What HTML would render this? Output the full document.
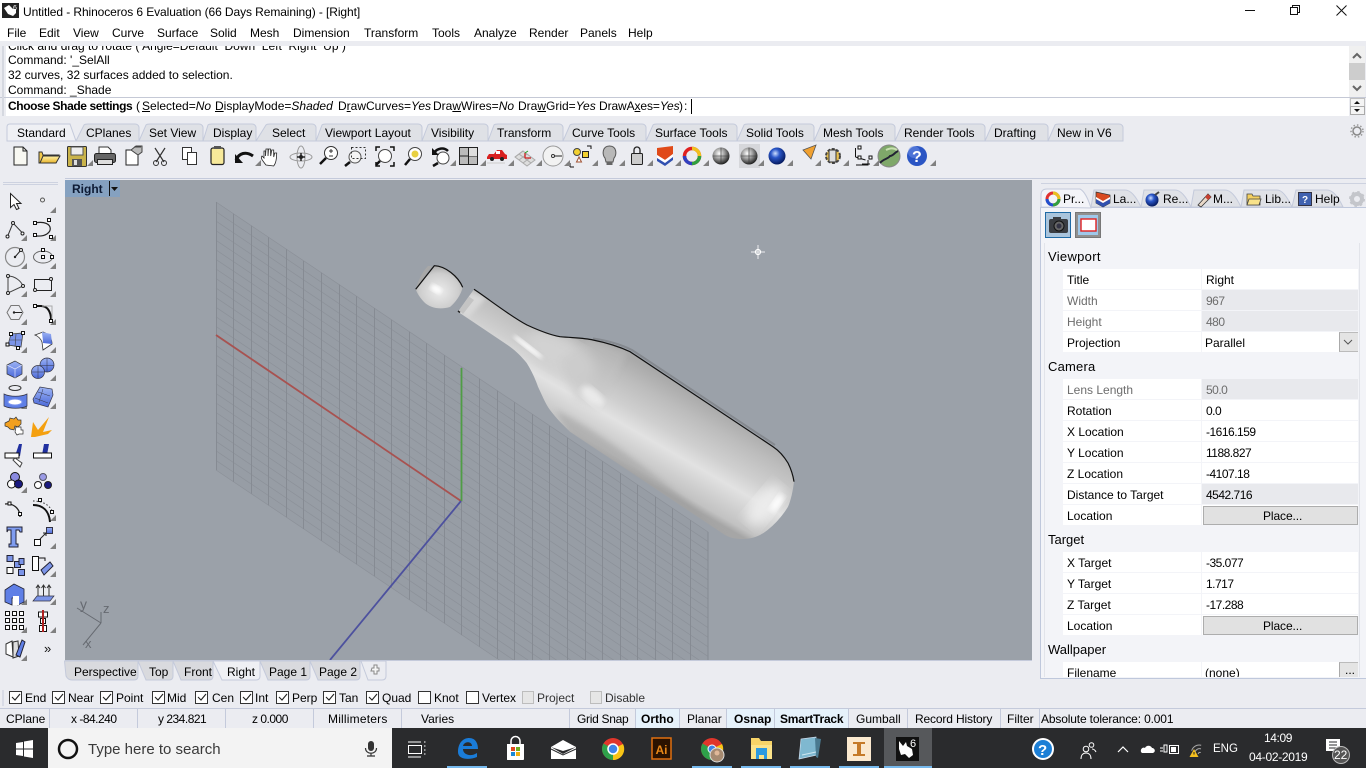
<!DOCTYPE html>
<html><head><meta charset="utf-8"><title>Rhinoceros 6</title>
<style>
html,body{margin:0;padding:0;width:1366px;height:768px;overflow:hidden;background:#ebecf1;font-family:"Liberation Sans",sans-serif;font-size:12px;color:#000}
.a{position:absolute}
.t{position:absolute;white-space:nowrap;line-height:14px;height:14px}
.n{letter-spacing:-.5px}
.g{color:#6d6d6d}
.w{color:#fff}
.b{font-weight:bold}
svg{position:absolute;left:0;top:0}
</style></head><body>
<div class="a" style="left:0;top:0;width:1366px;height:41px;background:#fff"></div>
<div class="a" style="left:6px;top:46px;width:1343px;height:70px;background:#fff"></div>
<div class="a" style="left:1349px;top:46px;width:16px;height:51px;background:#f0f0f0"></div>
<div class="a" style="left:1349px;top:63px;width:16px;height:17px;background:#cdcdcd"></div>
<div class="a" style="left:0;top:97px;width:1366px;height:1px;background:#c5c9d6"></div>
<div class="a" style="left:2px;top:46px;width:2px;height:70px;background:#d5d8e0"></div>
<div class="a" style="left:65px;top:180px;width:967px;height:480px;background:#9ba1a9"></div>
<div class="a" style="left:65px;top:178px;width:1301px;height:1px;background:#c4cadb"></div>
<div class="a" style="left:65px;top:180px;width:55px;height:17px;background:#85a1c0"></div>
<div class="a" style="left:3px;top:182px;width:55px;height:1px;background:#cdd2e0"></div>
<div class="a" style="left:3px;top:184px;width:55px;height:1px;background:#cdd2e0"></div>
<div class="a" style="left:1041px;top:183px;width:325px;height:1px;background:#cdd2e0"></div>
<div class="a" style="left:65px;top:660px;width:967px;height:1px;background:#c4cadb"></div>

<!-- right panel -->
<div class="a" style="left:1040px;top:207px;width:325px;height:470px;background:#f3f4f8;border:1px solid #bfc8dc;border-right:none"></div>
<div class="a" style="left:1044px;top:243px;width:314px;height:434px;background:#f3f4f8;border-left:1px solid #e2e4ea;border-right:1px solid #e2e4ea"></div>
<div class="a" style="left:1063px;top:269px;width:138px;height:20px;background:#fff"></div><div class="a" style="left:1202px;top:269px;width:156px;height:20px;background:#fff"></div>
<div class="a" style="left:1063px;top:290px;width:138px;height:20px;background:#fff"></div><div class="a" style="left:1202px;top:290px;width:156px;height:20px;background:#e8e9ed"></div>
<div class="a" style="left:1063px;top:311px;width:138px;height:20px;background:#fff"></div><div class="a" style="left:1202px;top:311px;width:156px;height:20px;background:#e8e9ed"></div>
<div class="a" style="left:1063px;top:332px;width:138px;height:20px;background:#fff"></div><div class="a" style="left:1202px;top:332px;width:156px;height:20px;background:#fff"></div>
<div class="a" style="left:1339px;top:332px;width:19px;height:20px;background:#e4e4e4;border-left:1px solid #aaa;border-top:1px solid #bbb;border-bottom:1px solid #bbb;box-sizing:border-box"></div>
<div class="a" style="left:1063px;top:379px;width:138px;height:20px;background:#fff"></div><div class="a" style="left:1202px;top:379px;width:156px;height:20px;background:#e8e9ed"></div>
<div class="a" style="left:1063px;top:400px;width:138px;height:20px;background:#fff"></div><div class="a" style="left:1202px;top:400px;width:156px;height:20px;background:#fff"></div>
<div class="a" style="left:1063px;top:421px;width:138px;height:20px;background:#fff"></div><div class="a" style="left:1202px;top:421px;width:156px;height:20px;background:#fff"></div>
<div class="a" style="left:1063px;top:442px;width:138px;height:20px;background:#fff"></div><div class="a" style="left:1202px;top:442px;width:156px;height:20px;background:#fff"></div>
<div class="a" style="left:1063px;top:463px;width:138px;height:20px;background:#fff"></div><div class="a" style="left:1202px;top:463px;width:156px;height:20px;background:#fff"></div>
<div class="a" style="left:1063px;top:484px;width:138px;height:20px;background:#fff"></div><div class="a" style="left:1202px;top:484px;width:156px;height:20px;background:#e8e9ed"></div>
<div class="a" style="left:1063px;top:505px;width:138px;height:20px;background:#fff"></div><div class="a" style="left:1202px;top:505px;width:156px;height:20px;background:#fff"></div>
<div class="a" style="left:1203px;top:506px;width:155px;height:19px;background:#e1e1e1;border:1px solid #adadad;box-sizing:border-box"></div>
<div class="a" style="left:1063px;top:552px;width:138px;height:20px;background:#fff"></div><div class="a" style="left:1202px;top:552px;width:156px;height:20px;background:#fff"></div>
<div class="a" style="left:1063px;top:573px;width:138px;height:20px;background:#fff"></div><div class="a" style="left:1202px;top:573px;width:156px;height:20px;background:#fff"></div>
<div class="a" style="left:1063px;top:594px;width:138px;height:20px;background:#fff"></div><div class="a" style="left:1202px;top:594px;width:156px;height:20px;background:#fff"></div>
<div class="a" style="left:1063px;top:615px;width:138px;height:20px;background:#fff"></div><div class="a" style="left:1202px;top:615px;width:156px;height:20px;background:#fff"></div>
<div class="a" style="left:1203px;top:616px;width:155px;height:19px;background:#e1e1e1;border:1px solid #adadad;box-sizing:border-box"></div>
<div class="a" style="left:1063px;top:662px;width:138px;height:15px;background:#fff"></div><div class="a" style="left:1202px;top:662px;width:156px;height:15px;background:#fff"></div>
<div class="a" style="left:1339px;top:662px;width:19px;height:15px;background:#e4e4e4;border-left:1px solid #aaa;border-top:1px solid #bbb;box-sizing:border-box"></div>

<!-- status bar -->
<div class="a" style="left:0;top:708px;width:1366px;height:1px;background:#c4cadb"></div>
<div class="a" style="left:635px;top:709px;width:44px;height:19px;background:#e6f2fb"></div>
<div class="a" style="left:727px;top:709px;width:121px;height:19px;background:#e6f2fb"></div>
<div class="a" style="left:49px;top:709px;width:1px;height:19px;background:#c4cadb"></div>
<div class="a" style="left:137px;top:709px;width:1px;height:19px;background:#c4cadb"></div>
<div class="a" style="left:225px;top:709px;width:1px;height:19px;background:#c4cadb"></div>
<div class="a" style="left:313px;top:709px;width:1px;height:19px;background:#c4cadb"></div>
<div class="a" style="left:401px;top:709px;width:1px;height:19px;background:#c4cadb"></div>
<div class="a" style="left:569px;top:709px;width:1px;height:19px;background:#c4cadb"></div>
<div class="a" style="left:635px;top:709px;width:1px;height:19px;background:#c4cadb"></div>
<div class="a" style="left:679px;top:709px;width:1px;height:19px;background:#c4cadb"></div>
<div class="a" style="left:726px;top:709px;width:1px;height:19px;background:#c4cadb"></div>
<div class="a" style="left:774px;top:709px;width:1px;height:19px;background:#c4cadb"></div>
<div class="a" style="left:848px;top:709px;width:1px;height:19px;background:#c4cadb"></div>
<div class="a" style="left:907px;top:709px;width:1px;height:19px;background:#c4cadb"></div>
<div class="a" style="left:1000px;top:709px;width:1px;height:19px;background:#c4cadb"></div>
<div class="a" style="left:1039px;top:709px;width:1px;height:19px;background:#c4cadb"></div>

<!-- taskbar -->
<div class="a" style="left:0;top:728px;width:1366px;height:40px;background:#2a2b2d"></div>
<div class="a" style="left:48px;top:728px;width:344px;height:40px;background:#f3f3f3"></div>
<div class="a" style="left:884px;top:728px;width:48px;height:40px;background:#56585b"></div>
<div class="a" style="left:447px;top:766px;width:40px;height:2px;background:#76b9ed"></div>
<div class="a" style="left:692px;top:766px;width:40px;height:2px;background:#76b9ed"></div>
<div class="a" style="left:741px;top:766px;width:40px;height:2px;background:#76b9ed"></div>
<div class="a" style="left:790px;top:766px;width:40px;height:2px;background:#76b9ed"></div>
<div class="a" style="left:839px;top:766px;width:40px;height:2px;background:#76b9ed"></div>
<div class="a" style="left:884px;top:766px;width:48px;height:2px;background:#76b9ed"></div>

<svg width="1366" height="768" viewBox="0 0 1366 768">
<defs>
<linearGradient id="bo" gradientUnits="userSpaceOnUse" x1="690" y1="391" x2="640" y2="478">
<stop offset="0" stop-color="#a9a9a9"/><stop offset=".2" stop-color="#bcbcbc"/><stop offset=".45" stop-color="#cfcfcf"/><stop offset=".62" stop-color="#e2e2e2"/><stop offset=".8" stop-color="#cfcfcf"/><stop offset=".93" stop-color="#c2c2c2"/><stop offset="1" stop-color="#a6a6a6"/>
</linearGradient>
<radialGradient id="cp" cx=".5" cy=".6" r=".6"><stop offset="0" stop-color="#ececec"/><stop offset=".7" stop-color="#cdcdcd"/><stop offset="1" stop-color="#aaa"/></radialGradient>
<radialGradient id="sp" cx=".4" cy=".35" r=".65"><stop offset="0" stop-color="#fff"/><stop offset=".5" stop-color="#999"/><stop offset="1" stop-color="#222"/></radialGradient>
<radialGradient id="bs" cx=".4" cy=".35" r=".65"><stop offset="0" stop-color="#cfe0ff"/><stop offset=".4" stop-color="#2a56c8"/><stop offset="1" stop-color="#051a60"/></radialGradient>
<linearGradient id="bl" x1="0" y1="0" x2="0" y2="1"><stop offset="0" stop-color="#9db4f5"/><stop offset="1" stop-color="#4a68d8"/></linearGradient>
<linearGradient id="ye" x1="0" y1="0" x2="0" y2="1"><stop offset="0" stop-color="#fff2a8"/><stop offset="1" stop-color="#e8b42c"/></linearGradient>
<filter id="f2"><feGaussianBlur stdDeviation="2"/></filter>
<filter id="f3"><feGaussianBlur stdDeviation="3"/></filter>
<filter id="f6"><feGaussianBlur stdDeviation="6"/></filter>
<clipPath id="vp"><rect x="65" y="180" width="967" height="480"/></clipPath>
<clipPath id="bc"><path d="M474 289.3C490 300 510 316 527 325C540 331 550 335 560 336.7C575 338 585 338 593 340C608 343 620 347 630 351.7L773 446.7C781 452 785 458 788 463C791 469 793 475 794 481.7C793 490 791 500 788 506.7C782 517 770 530 760 535C754 538 748 539 743 539C736 539 730 538 725 535L570 431.7C562 424 556 418 550 410C545 403 542 395 538 386.7C535 378 531 370 526.7 363C522 357 516 351 510 346.7L458 311.7Z"/></clipPath>
<clipPath id="cc"><path d="M415.7 289.3L434.3 265.7C445 266 458 276 462.7 287.3C461 295 455 303 450 307C440 310 430 308 424 302C420 298 417 293 415.700 289.3Z"/></clipPath>
</defs>

<!-- grid -->
<g clip-path="url(#vp)">
<path d="M216 202L708 532V800L216 470Z" fill="#979da5"/>
<g fill="none" stroke="#8c9199" stroke-width=".7">
<path d="M216 202l492 330M216 211.6l492 330M216 221.1l492 330M216 230.7l492 330M216 240.3l492 330M216 249.9l492 330M216 259.4l492 330M216 269l492 330M216 278.6l492 330M216 288.1l492 330M216 297.7l492 330M216 307.3l492 330M216 316.8l492 330M216 326.4l492 330M216 336l492 330M216 345.6l492 330M216 355.1l492 330M216 364.7l492 330M216 374.3l492 330M216 383.8l492 330M216 393.4l492 330M216 403l492 330M216 412.5l492 330M216 422.1l492 330M216 431.7l492 330M216 441.3l492 330M216 450.8l492 330M216 460.4l492 330M216 470l492 330"/>
</g>
<path fill="none" stroke="#868b93" stroke-width="1" d="M216.5 202v268M233.5 213.8v268M251.5 225.6v268M268.5 237.4v268M286.5 249.2v268M303.5 261v268M321.5 272.7v268M339.5 284.5v268M356.5 296.3v268M374.5 308.1v268M391.5 319.9v268M409.5 331.7v268M426.5 343.5v268M444.5 355.3v268M461.5 367.1v268M479.5 378.8v268M497.5 390.6v268M514.5 402.4v268M532.5 414.2v268M549.5 426v268M567.5 437.8v268M585.5 449.6v268M602.5 461.4v268M620.5 473.2v268M637.5 485v268M655.5 496.8v268M672.5 508.5v268M690.5 520.3v268M708 532v268"/>
<path d="M216 335L461 501" stroke="#a85250" stroke-width="1.8" fill="none"/>
<path d="M461.5 368V501" stroke="#4f9d45" stroke-width="1.8" fill="none"/>
<path d="M461 501L330 660" stroke="#4d519e" stroke-width="1.8" fill="none"/>
</g>

<!-- bottle -->
<path d="M593 338.500C610 341 622 345 632 350L775 445" fill="none" stroke="#85898f" stroke-width="2"/>
<path d="M474 289.3C490 300 510 316 527 325C540 331 550 335 560 336.7C575 338 585 338 593 340C608 343 620 347 630 351.7L773 446.7C781 452 785 458 788 463C791 469 793 475 794 481.7C793 490 791 500 788 506.7C782 517 770 530 760 535C754 538 748 539 743 539C736 539 730 538 725 535L570 431.7C562 424 556 418 550 410C545 403 542 395 538 386.7C535 378 531 370 526.7 363C522 357 516 351 510 346.7L458 311.7Z" fill="url(#bo)"/>
<g clip-path="url(#bc)">
<ellipse cx="560" cy="355" rx="38" ry="18" transform="rotate(30 560 355)" fill="#d2d2d2" filter="url(#f6)"/>
<path d="M470 292L458 312L468 318L486 298Z" fill="#d8d8d8" filter="url(#f2)"/>
<path d="M468 296L459 310L463 314L474 300Z" fill="#c4c4c4"/>
<ellipse cx="528" cy="347" rx="18" ry="2.500" transform="rotate(38 528 347)" fill="#fff" filter="url(#f2)"/>
<ellipse cx="592" cy="396" rx="13" ry="7" transform="rotate(40 592 396)" fill="#fff" filter="url(#f3)"/>
<path d="M628 352L598 410L575 400L560 360L590 340Z" fill="#c4c4c4" opacity=".35" filter="url(#f3)"/>
<path d="M555 410C600 430 690 500 725 538L570 435Z" fill="#9e9e9e" opacity=".5" filter="url(#f3)"/>
<ellipse cx="765" cy="505" rx="24" ry="12" transform="rotate(-50 765 505)" fill="#ececec" filter="url(#f6)"/>
<ellipse cx="777" cy="503" rx="4" ry="10" transform="rotate(35 777 503)" fill="#fff" filter="url(#f3)"/>
</g>
<path d="M474 289.3C490 300 510 316 527 325C540 331 550 335 560 336.7C575 338 585 338 593 340C608 343 620 347 630 351.7L773 446.7C781 452 785 458 788 463C791 469 793 475 794 481.7" fill="none" stroke="#111" stroke-width="1.2"/>
<path d="M458 311l2 1.5" stroke="#222" stroke-width="1.5"/>
<path d="M415.7 289.3L434.3 265.7C445 266 458 276 462.7 287.3C461 295 455 303 450 307C440 310 430 308 424 302C420 298 417 293 415.700 289.3Z" fill="url(#cp)"/>
<g clip-path="url(#cc)"><ellipse cx="436" cy="289" rx="6" ry="3.500" transform="rotate(30 436 289)" fill="#fff" filter="url(#f2)"/></g>
<path d="M415.7 289.3L432 266L428 266C422 272 418 281 415.7 289.3Z" fill="#a8a8a8"/>
<path d="M415.7 289.3L434.3 265.7C445 266 458 276 462.7 287.3" fill="none" stroke="#111" stroke-width="1.2"/>
<!-- cursor sparkle -->
<g stroke="#fff" fill="none"><path d="M758 245v14M751 252h14" stroke-width="1" opacity=".8"/><circle cx="758" cy="252" r="2.5" stroke-width="1.2"/></g>
<!-- axis mini -->
<g stroke="#666a71" stroke-width="1" fill="none"><path d="M101 623L77 608M101 623V612M101 623L83 645"/></g>
<text x="80" y="609" font-size="14" fill="#666a71" font-family="Liberation Sans">y</text>
<text x="103" y="613" font-size="13" fill="#666a71" font-family="Liberation Sans">z</text>
<text x="85" y="648" font-size="13" fill="#666a71" font-family="Liberation Sans">x</text>

<!-- viewport label arrow -->
<path d="M109.5 181v15" stroke="#111"/><path d="M111 187h7l-3.5 4z" fill="#111"/>

<!-- top tabs -->
<g fill="#dfe1e6" stroke="#c4cadb">
<path d="M76 141L84 125Q85 124 88 124H135Q138 124 139 127L139 141Z"/>
<path d="M139 141L146 125Q147 124 150 124H199Q202 124 203 127L203 141Z"/>
<path d="M203 141L208 125Q209 124 212 124H252Q255 124 256 127L256 141Z"/>
<path d="M256 141L266 125Q267 124 270 124H312Q315 124 316 127L316 141Z"/>
<path d="M316 141L322 125Q323 124 326 124H418Q421 124 422 127L422 141Z"/>
<path d="M422 141L428 125Q429 124 432 124H484Q487 124 488 127L488 141Z"/>
<path d="M488 141L494 125Q495 124 498 124H559Q562 124 563 127L563 141Z"/>
<path d="M563 141L570 125Q571 124 574 124H642Q645 124 646 127L646 141Z"/>
<path d="M646 141L653 125Q654 124 657 124H733Q736 124 737 127L737 141Z"/>
<path d="M737 141L744 125Q745 124 748 124H810Q813 124 814 127L814 141Z"/>
<path d="M814 141L821 125Q822 124 825 124H891Q894 124 895 127L895 141Z"/>
<path d="M895 141L902 125Q903 124 906 124H981Q984 124 985 127L985 141Z"/>
<path d="M985 141L992 125Q993 124 996 124H1044Q1047 124 1048 127L1048 141Z"/>
<path d="M1048 141L1055 125Q1056 124 1059 124H1119Q1122 124 1123 127L1123 141Z"/>
</g>
<path d="M7 141V127Q7 124 10 124H70L76 141Z" fill="#eff0f4" stroke="#c4cadb"/>

<!-- bottom tabs -->
<g fill="#d9dade" stroke="#c4cadb">
<path d="M64.500 661H138V676Q138 680 134 680H72Q68 680 66 676Z"/>
<path d="M138 661H173V676Q173 680 169 680H146Z"/>
<path d="M173 661H213V676Q213 680 209 680H181Z"/>
<path d="M260 661H310V676Q310 680 306 680H268Z"/>
<path d="M310 661H360V676Q360 680 356 680H318Z"/>
</g>
<path d="M213 661H260V676Q260 680 256 680H222Z" fill="#eff0f4" stroke="#c4cadb"/>
<path d="M361 661H386V676Q386 680 382 680H368Z" fill="#ebecf1" stroke="#c4cadb"/>
<path d="M372 671h2v-3h3v3h2v3h-2v3h-3v-3h-3z" fill="#f6f6f6" stroke="#888" transform="translate(0 -3)"/>

<!-- right panel tabs -->
<g fill="#dfe1e6" stroke="#c4cadb">
<path d="M1091 207L1094 190H1125Q1133 190 1141 207Z"/>
<path d="M1141 207L1144 190H1175Q1183 190 1191 207Z"/>
<path d="M1191 207L1194 190H1225Q1233 190 1241 207Z"/>
<path d="M1241 207L1244 190H1277Q1284 190 1292 207Z"/>
<path d="M1292 207L1296 190H1327Q1335 190 1343 207Z"/>
</g>
<path d="M1041 207V195Q1041 189 1047 189H1080Q1086 192 1091 208Z" fill="#f3f4f8" stroke="#c4cadb"/>
<!-- panel tab icons -->
<g>
<circle cx="1053" cy="199" r="6" fill="none" stroke="#e03030" stroke-width="3"/>
<path d="M1053 193a6 6 0 0 1 6 6" fill="none" stroke="#e8c020" stroke-width="3"/><path d="M1059 199a6 6 0 0 1-6 6" fill="none" stroke="#30a040" stroke-width="3"/><path d="M1053 205a6 6 0 0 1-6-6" fill="none" stroke="#2050d0" stroke-width="3"/>
<path d="M1096 192L1110 195V203L1103 207L1096 203Z" fill="#d84a20" stroke="#333" stroke-width=".7"/><path d="M1096 199l7 4 7-4v4l-7 4-7-4z" fill="#3050b0"/><path d="M1096 197l7 4 7-4v2l-7 4-7-4z" fill="#fff"/>
<circle cx="1152" cy="200" r="6.500" fill="url(#bs)"/><path d="M1155 195l4-3" stroke="#444" stroke-width="2"/>
<path d="M1198 205l10-11 3 3-10 10z" fill="#e8d8c8" stroke="#333" stroke-width=".8"/><path d="M1205 197l3-3 3 3-3 3z" fill="#c84030"/>
<path d="M1247 194h5l1 2h7v9h-13z" fill="#f4d060" stroke="#444" stroke-width=".8"/><path d="M1247 205l2-6h12l-2 6z" fill="#f8e28a" stroke="#444" stroke-width=".8"/>
<rect x="1298.500" y="192.500" width="13" height="13" fill="#4062b0" stroke="#334"/><text x="1302" y="203" font-size="10" fill="#fff" font-weight="bold" font-family="Liberation Sans">?</text>
<circle cx="1357" cy="199" r="5" fill="none" stroke="#c4c6cb" stroke-width="4"/><circle cx="1357" cy="199" r="7" fill="none" stroke="#c4c6cb" stroke-width="2" stroke-dasharray="2.500 3"/>
</g>
<!-- camera buttons -->
<rect x="1045.500" y="212.500" width="25" height="25" fill="#a9c4dc" stroke="#1f6aa5"/>
<rect x="1049" y="219" width="19" height="14" rx="2" fill="#3a3d42"/><rect x="1053" y="217" width="8" height="3" fill="#3a3d42"/><circle cx="1059" cy="226" r="5" fill="#666" stroke="#111"/><circle cx="1059" cy="226" r="2.500" fill="#334"/>
<rect x="1075.500" y="212.500" width="25" height="25" fill="#909090" stroke="#777"/><rect x="1078" y="215" width="20" height="20" fill="#9fc8ea"/><rect x="1081" y="219" width="15" height="12" fill="#fff" stroke="#e02020" stroke-width="1.400"/>
<path d="M1344 340l4 4 4-4" fill="none" stroke="#555"/>

<!-- scroll chevrons -->
<path d="M1353 58l4-4 4 4" fill="none" stroke="#666" stroke-width="2"/><path d="M1353 86l4 4 4-4" fill="none" stroke="#666" stroke-width="2"/>
<rect x="1350.500" y="98.500" width="14" height="8" fill="#f4f4f4" stroke="#c0c0c0"/><rect x="1350.500" y="106.500" width="14" height="8" fill="#f4f4f4" stroke="#aaa"/>
<path d="M1357 101l-3 3h6z" fill="#111"/><path d="M1354 109h6l-3 3z" fill="#111"/>
<!-- window controls -->
<path d="M1245 10.500h10" stroke="#111"/><path d="M1292.500 7.500v-2h7v7h-2M1290.500 7.500h7v7h-7z" fill="none" stroke="#111"/><path d="M1336.500 5.500l10 10M1346.500 5.500l-10 10" stroke="#111" fill="none"/>
<!-- app icon -->
<rect x="2" y="3" width="17" height="15" fill="#222"/><path d="M4 8l5-3 4 4 3 0 0 4-3 3-5-2-2-3z" fill="#fff"/><text x="13" y="10" font-size="7" fill="#fff" font-family="Liberation Sans">6</text>
<!-- gear top right -->
<circle cx="1357" cy="131" r="4" fill="none" stroke="#888" stroke-width="1.500"/><circle cx="1357" cy="131" r="6" fill="none" stroke="#999" stroke-width="1.500" stroke-dasharray="1.500 2"/>

<!-- TOP TOOLBAR ICONS -->
<path d="M14 147h9l4 4v14H14z" fill="#f8f8f2" stroke="#222"/><path d="M23 147v4h4" fill="none" stroke="#222"/>
<path d="M39 152v11h17l3-8H43l-1-3z" fill="#f2c94c" stroke="#333"/><path d="M40 163l3-7h17l-4 7z" fill="url(#ye)" stroke="#333"/>
<rect x="67.500" y="146.500" width="19" height="20" rx="1" fill="#c9b34a" stroke="#333"/><rect x="71" y="147" width="12" height="8" fill="#eee" stroke="#555"/><rect x="72" y="159" width="10" height="7" fill="#555"/><rect x="74" y="160" width="3" height="5" fill="#ddd"/>
<rect x="94.500" y="153.500" width="21" height="9" rx="2" fill="#666" stroke="#222"/><path d="M99 153v-6h9l3 3v3" fill="#fff" stroke="#333"/><rect x="97.500" y="159.500" width="15" height="5" fill="#ddd" stroke="#222"/>
<path d="M126 150h12v15h-12z" fill="#fff" stroke="#222"/><path d="M131 150l5-4h6v6l-4 3z" fill="#bbb" stroke="#444"/><path d="M134 147l7 0" stroke="#444"/>
<path d="M155 148l9 14M165 148l-9 14" stroke="#333" stroke-width="1.200" fill="none"/><circle cx="156" cy="163" r="2.500" fill="none" stroke="#333"/><circle cx="164" cy="163" r="2.500" fill="none" stroke="#333"/>
<rect x="182.500" y="147.500" width="9" height="12" fill="#fff" stroke="#333"/><rect x="187.500" y="152.500" width="9" height="12" fill="#fff" stroke="#333"/>
<rect x="211" y="148" width="13" height="16.500" rx="2" fill="#f7e99a" stroke="#222" stroke-width="1.200"/><rect x="214" y="146" width="7" height="3" fill="#555"/>
<path d="M236 160c3-7 10-9 17-4" fill="none" stroke="#111" stroke-width="3"/><path d="M235 154v9h8z" fill="#111"/>
<path d="M266 165c-3-4-6-7-4-9l2 2v-7h1.500v5l.5-7h2v7l.5-7h2l.2 7 1-6h2v7l1-4h2c0 6-.5 10-3 13z" fill="#fff" stroke="#222" stroke-width=".8"/>
<ellipse cx="301" cy="157" rx="11" ry="4" fill="none" stroke="#999"/><ellipse cx="301" cy="157" rx="4" ry="11" fill="none" stroke="#999"/><path d="M297 157h8M301 153v8" stroke="#222" stroke-width="1.500"/><circle cx="301" cy="157" r="2" fill="#222"/>
<circle cx="331" cy="153" r="6.500" fill="#fff" stroke="#333"/><path d="M326 158l-6 6" stroke="#111" stroke-width="2.500"/><path d="M329 151h4M331 149v4M329 156h4" stroke="#333"/>
<circle cx="355" cy="157" r="6" fill="#f4f4f4" stroke="#555"/><path d="M350 162l-5 4" stroke="#111" stroke-width="2.500"/><rect x="351.500" y="147.500" width="14" height="11" fill="none" stroke="#333" stroke-dasharray="2 2"/>
<circle cx="385" cy="156" r="6.500" fill="#fff" stroke="#444"/><path d="M380 161l-4 4" stroke="#111" stroke-width="2.500"/><path d="M376 151v-4h4M394 151v-4h-4M376 162v4h4M394 162v4h-4" fill="none" stroke="#111" stroke-width="1.500"/>
<circle cx="415" cy="154" r="6.500" fill="#fff" stroke="#444"/><circle cx="415" cy="154" r="3.500" fill="#e8d040"/><path d="M410 159l-5 6" stroke="#111" stroke-width="2.500"/>
<circle cx="443" cy="158" r="6" fill="#fff" stroke="#444"/><path d="M438 163l-5 3" stroke="#111" stroke-width="2.500"/><path d="M434 153c3-5 10-6 14-2" fill="none" stroke="#111" stroke-width="2.500"/><path d="M432 148v7h7z" fill="#111"/>
<rect x="459.500" y="147.500" width="18" height="17" fill="#bbb" stroke="#222"/><path d="M468.500 147v18M459 156h19" stroke="#222"/><path d="M469 148h8v8h-8z" fill="#ddd"/>
<path d="M487 157l2-3h5l3-4h5l3 4 2 1v4h-20z" fill="#d82020"/><circle cx="492" cy="159" r="2" fill="#222"/><circle cx="502" cy="159" r="2" fill="#222"/><path d="M505 163h-18" stroke="#ccc"/><rect x="496" y="151" width="4" height="3" fill="#fff"/>
<path d="M515 157l8-6 12 9-8 6z" fill="#ddd" stroke="#aaa"/><path d="M519 154l12 9M523 151l-8 6M527 154l-8 6M531 157l-8 6" stroke="#aaa" fill="none"/><path d="M525 158v-5M525 158h6" stroke="#d02020" stroke-width="1.300"/><path d="M525 153l3-2" stroke="#20a020"/>
<circle cx="553" cy="156" r="10" fill="#f2f2f2" stroke="#999"/><circle cx="553" cy="156" r="1.500" fill="#fff" stroke="#333"/><path d="M554 156h8" stroke="#222"/>
<circle cx="577" cy="152" r="3.500" fill="#f2d030" stroke="#444"/><rect x="582.500" y="151.500" width="6" height="6" fill="#f2d030" stroke="#222"/><path d="M579 157l-2.500 5h5z" fill="#fff" stroke="#a05030"/><path d="M587 146h4v3M570 167v-4M574 167h-4" fill="none" stroke="#111"/>
<path d="M605 158c-3-3-3-12 4.500-12s7.500 9 4.500 12l-1 4h-7z" fill="#b8b8b8" stroke="#555"/><rect x="606.500" y="162" width="6" height="3" fill="#666"/>
<rect x="631.500" y="153.500" width="11" height="11" rx="1" fill="#ccc" stroke="#222"/><path d="M634 153v-3a3 3 0 0 1 6 0v3" fill="none" stroke="#222" stroke-width="1.300"/>
<path d="M657 148l16-2v8l-8 6-8-5z" fill="#e04a18"/><path d="M657 155l8 5 8-6v3l-8 6-8-5z" fill="#fff"/><path d="M657 158l8 5 8-6v3l-8 6-8-5z" fill="#3050b0"/>
<circle cx="692" cy="156" r="7.500" fill="none" stroke="#e02020" stroke-width="3.500"/><path d="M692 148.500a7.500 7.500 0 0 1 7.500 7.500" fill="none" stroke="#f0c020" stroke-width="3.500"/><path d="M699.500 156a7.500 7.500 0 0 1-7.500 7.500" fill="none" stroke="#30a040" stroke-width="3.500"/><path d="M692 163.500a7.500 7.500 0 0 1-7.500-7.500" fill="none" stroke="#3040c0" stroke-width="3.500"/>
<circle cx="721" cy="156" r="8.500" fill="url(#sp)"/><path d="M712.500 156h17M721 147.500v17" stroke="#333" stroke-width=".6"/>
<rect x="739" y="144" width="21" height="24" fill="#d6d7db"/><circle cx="749" cy="156" r="8.500" fill="url(#sp)"/><path d="M740.500 156h17M749 147.500v17" stroke="#333" stroke-width=".6"/>
<circle cx="777" cy="156" r="8.500" fill="url(#bs)"/>
<path d="M803 150l13-5-5 14z" fill="#f0a030" stroke="#555" stroke-width=".8"/>
<circle cx="833" cy="156" r="7" fill="#e8c050" stroke="#444" stroke-dasharray="3 1.500" stroke-width="2"/><rect x="829" y="150" width="7" height="12" fill="#ddd" stroke="#333"/>
<path d="M855.500 148v9M855.500 157l10 3M868 160v5h-12" fill="none" stroke="#111"/><rect x="858" y="146" width="3" height="3" fill="#fff" stroke="#111"/><rect x="858" y="156" width="3" height="3" fill="#fff" stroke="#111"/><rect x="869" y="156" width="3" height="3" fill="#fff" stroke="#111"/><path d="M862 164h8" stroke="#111"/>
<circle cx="889" cy="156" r="11" fill="#7fa86a" stroke="#888"/><path d="M880 163c3-4 8-4 10-7 3 0 4-3 8-5" stroke="#223" stroke-width="2" fill="none"/><path d="M886 150c4-2 8-2 11 0" stroke="#c8e0b0" stroke-width="2" fill="none"/>
<circle cx="917" cy="156" r="10" fill="#2a55c4"/><circle cx="914" cy="152" r="6" fill="#6f92e8" opacity=".5"/><text x="912" y="162" font-size="16" font-weight="bold" fill="#fff" font-family="Liberation Sans">?</text>

<!-- dropdown triangles -->
<path fill="#808080" d="M87 166l6-6v6zM255 166l6-6v6zM450 166l6-6v6zM480 166l6-6v6zM508 166l6-6v6zM536 166l6-6v6zM564 166l6-6v6zM592 166l6-6v6zM619 166l6-6v6zM647 166l6-6v6zM675 166l6-6v6zM703 166l6-6v6zM758 166l6-6v6zM787 166l6-6v6zM815 166l6-6v6zM843 166l6-6v6zM873 166l6-6v6zM930 166l6-6v6z"/>
<path fill="#808080" d="M50 213l6-6v6zM21 241l6-6v6zM50 241l6-6v6zM21 269l6-6v6zM50 269l6-6v6zM21 297l6-6v6zM50 297l6-6v6zM21 325l6-6v6zM50 325l6-6v6zM21 353l6-6v6zM50 353l6-6v6zM21 381l6-6v6zM50 381l6-6v6zM21 409l6-6v6zM50 409l6-6v6zM21 493l6-6v6zM50 521l6-6v6zM50 549l6-6v6zM50 577l6-6v6zM21 605l6-6v6zM50 605l6-6v6zM21 633l6-6v6zM50 633l6-6v6zM21 661l6-6v6z"/>

<!-- LEFT TOOLBAR ICONS -->
<path d="M10.500 193.500v14l3.500-3 2.500 5 2.500-1-2.500-5h4.500z" fill="#fff" stroke="#222"/><circle cx="42.500" cy="200" r="2" fill="#eee" stroke="#555"/>
<path d="M7.500 236.500L13 223l9.500 10" fill="none" stroke="#333"/><circle cx="7.500" cy="236.500" r="1.500" fill="#fff" stroke="#222"/><circle cx="13" cy="223" r="1.500" fill="#fff" stroke="#222"/><circle cx="22.500" cy="233.500" r="1.500" fill="#fff" stroke="#222"/>
<path d="M35 223c20-4 20 14 2 13" fill="none" stroke="#222" stroke-width="1.200"/><rect x="33.500" y="221.500" width="3" height="3" fill="#fff" stroke="#111"/><rect x="47.500" y="218.500" width="3" height="3" fill="#fff" stroke="#111"/><rect x="33.500" y="233.500" width="3" height="3" fill="#fff" stroke="#111"/><rect x="49.500" y="235.500" width="3" height="3" fill="#fff" stroke="#111"/>
<circle cx="15" cy="257" r="9.500" fill="none" stroke="#888" stroke-width="1.200"/><path d="M15 257l6-7" stroke="#222"/><circle cx="15" cy="257" r="1.200" fill="#222"/><circle cx="21" cy="250" r="1.500" fill="#fff" stroke="#222"/>
<ellipse cx="43" cy="257" rx="9.500" ry="6" fill="none" stroke="#666"/><rect x="41.500" y="248.500" width="3" height="3" fill="#fff" stroke="#111"/><rect x="41.500" y="255.500" width="3" height="3" fill="#fff" stroke="#111"/><rect x="50.500" y="255.500" width="3" height="3" fill="#fff" stroke="#111"/>
<path d="M8 276v17l15-7c-2-5-8-10-15-10z" fill="none" stroke="#444"/><circle cx="8" cy="276" r="1.500" fill="#fff" stroke="#222"/><circle cx="8" cy="293" r="1.500" fill="#fff" stroke="#222"/><circle cx="23" cy="286" r="1.500" fill="#fff" stroke="#222"/>
<rect x="34.500" y="279.500" width="17" height="11" fill="none" stroke="#222"/><circle cx="51" cy="279" r="1.500" fill="#fff" stroke="#222"/><circle cx="35" cy="290" r="1.500" fill="#fff" stroke="#222"/>
<path d="M7 312.500l4-7h8l4 7-4 7h-8z" fill="none" stroke="#777"/><path d="M14 312.500h8" stroke="#222"/><circle cx="14" cy="312.500" r="1.200" fill="#222"/>
<path d="M35 306h6c6 0 10 5 10 14" fill="none" stroke="#111" stroke-width="2"/><path d="M42 306h10v14" fill="none" stroke="#aaa"/><rect x="33.500" y="304.500" width="3" height="3" fill="#fff" stroke="#111"/><rect x="49.500" y="319.500" width="3" height="3" fill="#fff" stroke="#111"/>
<path d="M11 334l12-1-2 14-13-2z" fill="#7b94e8" stroke="#444" stroke-width=".8"/><path d="M16 334l-1 13M10 340l12 0" stroke="#444" stroke-width=".6"/><rect x="9.500" y="332.500" width="3" height="3" fill="#fff" stroke="#111"/><rect x="21.500" y="331.500" width="3" height="3" fill="#fff" stroke="#111"/><rect x="6" y="343" width="3" height="3" fill="#fff" stroke="#111"/><rect x="16.500" y="346.500" width="3" height="3" fill="#fff" stroke="#111"/>
<path d="M35 335l8-3c6 2 9 7 9 12l-9 6-1-8c-1-3-4-6-7-7z" fill="#fff" stroke="#333" stroke-width=".8"/><path d="M42 332l9 2 1 10-9-1c0-5-1-8-1-11z" fill="url(#bl)"/>
<path d="M7 365l8-4 7 4v9l-7 4-8-4z" fill="url(#bl)" stroke="#333" stroke-width=".7"/><path d="M15 369v9M7 365l8 4 7-4" stroke="#eef" stroke-width=".6" fill="none"/>
<circle cx="47" cy="365" r="7" fill="url(#bl)" stroke="#334" stroke-width=".7"/><circle cx="38" cy="372" r="6.500" fill="url(#bl)" stroke="#334" stroke-width=".7"/><path d="M40 365.500h14M47 358v14M32 372h12M38 366v12" stroke="#334" stroke-width=".5"/>
<ellipse cx="15" cy="388" rx="6" ry="2.500" fill="none" stroke="#333"/><path d="M4 394c6 3 17 3 23 0v12c-6 3-17 3-23 0z" fill="#5f7fe6" stroke="#334" stroke-width=".7"/><ellipse cx="15" cy="402" rx="7" ry="3" fill="#fff" stroke="#7a94ee"/>
<path d="M33 399l7-12 12 2 1 6-5 12-14-4z" fill="url(#bl)" stroke="#334" stroke-width=".7"/><path d="M38 392l12 4M35 398l13 5M43 389l-4 13" stroke="#334" stroke-width=".5"/>
<path d="M5 423l4-2 1-3 4 1 2-2 2 3 3 0 0 4-3 3-3-1-1 4-4-1-2-2-3-1z" fill="#f2a020" stroke="#333" stroke-width=".7"/><path d="M16 427h5v3h2v4h-4l-2 1-2-3z" fill="#fff" stroke="#333" stroke-width=".7"/>
<path d="M31 437l2-15 5 8 11-13-6 15 9-2-4 4-13 3z" fill="#f4a010"/>
<path d="M19 444h3l-2 12h-5z" fill="#2030a0"/><path d="M5 453h14v5H5z" fill="#fff" stroke="#111"/><path d="M15 458l7 5-2 4-7-7z" fill="#fff" stroke="#444"/>
<path d="M44 444h5l-2 11h-5z" fill="#2030a0"/><rect x="33.500" y="453" width="18" height="5" fill="#fff" stroke="#111"/>
<circle cx="15" cy="477" r="4.500" fill="#8a8ae0" stroke="#111"/><circle cx="11.500" cy="484" r="4" fill="#fff" stroke="#111"/><circle cx="18.500" cy="484" r="4" fill="#1a1a80" stroke="#111"/>
<circle cx="43" cy="477" r="3.500" fill="#9a9ae6" stroke="#556"/><circle cx="38" cy="485" r="3.500" fill="#fff" stroke="#222"/><circle cx="48" cy="485" r="3.500" fill="#1a1a80" stroke="#222"/>
<path d="M5 504c8-1 15 4 15 13" fill="none" stroke="#222" stroke-width="1.300"/><rect x="8" y="502" width="3" height="3" fill="#fff" stroke="#111"/><rect x="18.500" y="512.500" width="3" height="3" fill="#fff" stroke="#111"/>
<path d="M33 505c10 0 16 6 17 17" fill="none" stroke="#111" stroke-width="2"/><path d="M33 501c12 0 19 6 21 15" fill="none" stroke="#333" stroke-dasharray="1.500 2"/><rect x="38.500" y="498.500" width="3" height="3" fill="#fff" stroke="#111"/><rect x="50.500" y="510.500" width="3" height="3" fill="#fff" stroke="#111"/>
<path d="M7 527h15v5h-2l-1-2h-3v14h2v3h-9v-3h2v-14h-3l-1 2H7z" fill="#7f9cf0" stroke="#223"/>
<rect x="34.500" y="539.500" width="6" height="6" fill="#fff" stroke="#111"/><rect x="46.500" y="527.500" width="6" height="6" fill="url(#bl)" stroke="#334"/><path d="M40 539l6-6M46 533h-3M46 533v3" stroke="#222" fill="none"/>
<rect x="7" y="555.500" width="6" height="6" fill="#7b94e8" stroke="#223"/><rect x="14.500" y="561.500" width="6" height="6" fill="#7b94e8" stroke="#223"/><rect x="19" y="558.500" width="5" height="6" fill="#7b94e8" stroke="#223"/><rect x="7" y="567.500" width="6" height="6" fill="#fff" stroke="#111"/><rect x="18.500" y="569.500" width="6" height="6" fill="#7b94e8" stroke="#223"/>
<rect x="32.500" y="556.500" width="6" height="14" fill="#fff" stroke="#111"/><path d="M41 570l9-8 3 4-9 9z" fill="#7b94e8" stroke="#223"/><path d="M38 558h7v3" fill="none" stroke="#111"/>
<path d="M5 590l9-6 10 5v13l-6 3v-7h-6v7l-7-3z" fill="#5f7fe6" stroke="#223" stroke-width=".8"/><path d="M13 596h6v9h-6z" fill="#fff"/>
<path d="M33 601l4-5h17l-4 5z" fill="#7b94e8" stroke="#334" stroke-width=".7"/><path d="M38 596v-10M43.500 596v-10M49 596v-10M36 588l2-3 2 3M41.500 588l2-3 2 3M47 588l2-3 2 3" stroke="#333" fill="none"/>
<g fill="#fff" stroke="#111"><rect x="5.500" y="611.500" width="4" height="4"/><rect x="12.500" y="611.500" width="4" height="4"/><rect x="19.500" y="611.500" width="4" height="4"/><rect x="5.500" y="618.500" width="4" height="4"/><rect x="12.500" y="618.500" width="4" height="4"/><rect x="19.500" y="618.500" width="4" height="4"/><rect x="5.500" y="625.500" width="4" height="4"/><rect x="12.500" y="625.500" width="4" height="4"/><rect x="19.500" y="625.500" width="4" height="4"/></g>
<rect x="38.500" y="612" width="9" height="5" fill="#fff" stroke="#111"/><rect x="40.500" y="618.500" width="5" height="5" fill="#fff" stroke="#111"/><rect x="39.500" y="625.500" width="7" height="6" fill="#fff" stroke="#111"/><path d="M43 610v22" stroke="#b02020" stroke-width="2"/>
<path d="M6 644l6-3 1 16-7-3z" fill="#fff" stroke="#333"/><path d="M13 642l5-1 1 15-6 2z" fill="#ddd" stroke="#333"/><path d="M16 655l6-15 3 2-5 15z" fill="#5f7fe6" stroke="#223"/>
<text x="44" y="653" font-size="13" font-family="Liberation Sans" fill="#111">»</text>

<!-- checkboxes -->
<g fill="#fff" stroke="#333"><rect x="9.500" y="691.500" width="12" height="12"/><rect x="52.500" y="691.500" width="12" height="12"/><rect x="100.500" y="691.500" width="12" height="12"/><rect x="152.500" y="691.500" width="12" height="12"/><rect x="195.500" y="691.500" width="12" height="12"/><rect x="240.500" y="691.500" width="12" height="12"/><rect x="276.500" y="691.500" width="12" height="12"/><rect x="323.500" y="691.500" width="12" height="12"/><rect x="366.500" y="691.500" width="12" height="12"/><rect x="418.500" y="691.500" width="12" height="12"/><rect x="466.500" y="691.500" width="12" height="12"/></g>
<g fill="#e6e6e6" stroke="#bdbdbd"><rect x="522.500" y="691.500" width="11" height="12"/><rect x="590.500" y="691.500" width="11" height="12"/></g>
<g fill="none" stroke="#222" stroke-width="1.100"><path d="M12 697l3 3 5-6M55 697l3 3 5-6M103 697l3 3 5-6M155 697l3 3 5-6M198 697l3 3 5-6M243 697l3 3 5-6M279 697l3 3 5-6M326 697l3 3 5-6M369 697l3 3 5-6"/></g>
<path d="M3 690v16" stroke="#c4cadb"/>

<!-- TASKBAR ICONS -->
<path d="M16 743l7-1v6.500h-7zM24 741.500l9-1.500v8.500h-9zM16 749.500h7v6.500l-7-1zM24 749.500h9V758l-9-1.500z" fill="#fff"/>
<circle cx="68" cy="749" r="9" fill="none" stroke="#111" stroke-width="2.500"/>
<rect x="368" y="741" width="6" height="10" rx="3" fill="#333"/><path d="M365.500 748c0 7 11 7 11 0M371 753v3M367 756h8" fill="none" stroke="#333" stroke-width="1.200"/>
<rect x="408.500" y="745.500" width="13" height="8" fill="none" stroke="#fff"/><path d="M408 742h13M408 757h13M424 742h1.500M424 746h1.500M424 750h1.500M424 754h1.500" stroke="#fff"/>
<path d="M458 752c0-10 6-14 11-14 7 0 9 6 9 11h-15c0 6 8 8 14 4v4c-7 3-19 3-19-5zM463 746h9c0-5-8-5-9 0z" fill="#1a7cd8"/>
<path d="M507 744h17v15c0 1-1 1-1 1h-15c-1 0-1 0-1-1z" fill="#fff"/><path d="M511 744v-3a4.500 4.500 0 0 1 9 0v3" fill="none" stroke="#fff" stroke-width="1.500"/><rect x="511" y="747" width="4" height="4" fill="#e04a20"/><rect x="516" y="747" width="4" height="4" fill="#70b020"/><rect x="511" y="752" width="4" height="4" fill="#1a8ad8"/><rect x="516" y="752" width="4" height="4" fill="#f0b010"/>
<path d="M551 747l12-7 13 7v12h-25z" fill="#fff"/><path d="M551 747l12 7 13-7-13 4z" fill="#2a2b2d"/><path d="M551 749l12 6 13-6" fill="none" stroke="#2a2b2d"/>
<circle cx="613" cy="749" r="11" fill="#e0362c"/><path d="M613 749l-9.500-5.500A11 11 0 0 0 613 760z" fill="#2ea04a"/><path d="M613 749V760A11 11 0 0 0 623 744z" fill="#f7c416"/><circle cx="613" cy="749" r="5" fill="#3f84e8" stroke="#fff" stroke-width="1.500"/>
<rect x="652" y="738" width="19" height="21" fill="#2a1200" stroke="#e07010" stroke-width="1.500"/><text x="655.500" y="754" font-size="12" font-weight="bold" fill="#e88818" font-family="Liberation Sans">Ai</text>
<circle cx="712" cy="749" r="11" fill="#e0362c"/><path d="M712 749l-9.500-5.500A11 11 0 0 0 712 760z" fill="#2ea04a"/><path d="M712 749V760A11 11 0 0 0 722 744z" fill="#f7c416"/><circle cx="712" cy="749" r="4" fill="#3f84e8" stroke="#fff"/><circle cx="717" cy="755" r="7" fill="#a68a70" stroke="#ddd"/><circle cx="717" cy="753" r="2.500" fill="#e0b898"/>
<path d="M751 738h8l2 3h11v18h-21z" fill="#f7d468"/><path d="M751 745h21v14h-21z" fill="#fbe38a"/><path d="M756 752h11v7h-3v-4h-5v4h-3z" fill="#2c9ae0"/><rect x="756" y="748" width="11" height="4" fill="#2c9ae0"/>
<path d="M801 739l15-2 1 18-18 4z" fill="#7fb8d0" stroke="#cde" stroke-width=".7"/><path d="M815 738l6 1-3 19-2-1z" fill="#4a7a90"/><path d="M802 755l14-3" stroke="#cfe7f0"/>
<rect x="847" y="737" width="24" height="24" fill="#fbe9cf"/><path d="M853 742h12v2h-4v10h4v2h-12v-2h4v-10h-4z" fill="#c57a28"/>
<rect x="896" y="737" width="23" height="24" fill="#111"/><path d="M899 741l4 5 3-4 1 4 5 3 1 6-4 3-4-4-4 1-2-6z" fill="#fff"/><text x="910" y="747" font-size="11" fill="#fff" font-family="Liberation Sans">6</text>

<!-- tray -->
<circle cx="1043" cy="749" r="11" fill="#fff"/><circle cx="1043" cy="749" r="9" fill="#1c7fd6"/><text x="1038" y="755" font-size="15" font-weight="bold" fill="#fff" font-family="Liberation Sans">?</text>
<circle cx="1086" cy="749" r="2.800" fill="none" stroke="#fff"/><path d="M1081 759c0-4 2-6 5-6s5 2 5 6" fill="none" stroke="#fff"/><circle cx="1091.500" cy="745" r="2.300" fill="none" stroke="#fff"/><path d="M1092 749c2 0 3 1 4 3" fill="none" stroke="#fff"/>
<path d="M1118 752l5-5 5 5" fill="none" stroke="#fff" stroke-width="1.200"/>
<path d="M1141 752c-1-4 3-5 4-4 1-3 6-3 7 0 3 0 4 4 1 5h-11z" fill="#fff"/>
<path d="M1164 745h3v7h-3zM1160 748h3M1160 751h3" stroke="#fff" fill="none"/><rect x="1169.500" y="745.500" width="9" height="8" fill="none" stroke="#fff"/><rect x="1171" y="747" width="5" height="5" fill="#fff"/>
<path d="M1192 748c3-3 8-3 11 0M1194 751c2-2 5-2 7 0M1196 754c1-1 2-1 3 0" fill="none" stroke="#aaa" transform="rotate(-30 1197 750)"/><path d="M1194 749l-4.500 8h9z" fill="#f4c020"/><path d="M1194 752v2.500" stroke="#222"/>
<path d="M1326 739h14v12h-14z" fill="#fff"/><path d="M1329 742h8M1329 745h8M1329 748h8" stroke="#2a2b2d"/><circle cx="1341" cy="755" r="8.500" fill="#555" stroke="#bbb"/>
</svg>

<!-- title / menu -->
<div class="t" style="left:23px;top:5px;letter-spacing:-.09px">Untitled - Rhinoceros 6 Evaluation (66 Days Remaining) - [Right]</div>
<div class="t" style="left:7px;top:26px">File</div><div class="t" style="left:39px;top:26px">Edit</div><div class="t" style="left:73px;top:26px">View</div><div class="t" style="left:112px;top:26px">Curve</div><div class="t" style="left:157px;top:26px">Surface</div><div class="t" style="left:210px;top:26px">Solid</div><div class="t" style="left:250px;top:26px">Mesh</div><div class="t" style="left:293px;top:26px">Dimension</div><div class="t" style="left:364px;top:26px">Transform</div><div class="t" style="left:432px;top:26px">Tools</div><div class="t" style="left:474px;top:26px">Analyze</div><div class="t" style="left:529px;top:26px">Render</div><div class="t" style="left:580px;top:26px">Panels</div><div class="t" style="left:628px;top:26px">Help</div>

<!-- command -->
<div class="a" style="left:8px;top:46px;width:1000px;height:51px;overflow:hidden">
<div class="t" style="left:0;top:-7px">Click and drag to rotate ( Angle=Default&nbsp; Down&nbsp; Left&nbsp; Right&nbsp; Up )</div>
<div class="t" style="left:0;top:7px">Command: '_SelAll</div>
<div class="t" style="left:0;top:22px">32 curves, 32 surfaces added to selection.</div>
<div class="t" style="left:0;top:37px">Command: _Shade</div>
</div>
<div class="t b" style="left:8px;top:99px;letter-spacing:-.4px">Choose Shade settings</div>
<div class="t" style="left:136px;top:99px">(</div>
<div class="t" style="left:142px;top:99px"><u>S</u>elected=<i>No</i></div>
<div class="t" style="left:215px;top:99px"><u>D</u>isplayMode=<i>Shaded</i></div>
<div class="t" style="left:338px;top:99px">D<u>r</u>awCurves=<i>Yes</i></div>
<div class="t" style="left:433px;top:99px">Dra<u>w</u>Wires=<i>No</i></div>
<div class="t" style="left:518px;top:99px">Dra<u>w</u>Grid=<i>Yes</i></div>
<div class="t" style="left:599px;top:99px;letter-spacing:-.1px">DrawA<u>x</u>es=<i>Yes</i></div>
<div class="t" style="left:679px;top:99px">)</div><div class="t" style="left:684px;top:99px">:</div>
<div class="a" style="left:691px;top:99px;width:1px;height:15px;background:#000"></div>

<!-- tabs -->
<div class="t" style="left:17px;top:126px">Standard</div><div class="t" style="left:86px;top:126px">CPlanes</div><div class="t" style="left:149px;top:126px">Set View</div><div class="t" style="left:213px;top:126px">Display</div><div class="t" style="left:272px;top:126px">Select</div><div class="t" style="left:325px;top:126px">Viewport Layout</div><div class="t" style="left:431px;top:126px">Visibility</div><div class="t" style="left:497px;top:126px">Transform</div><div class="t" style="left:572px;top:126px">Curve Tools</div><div class="t" style="left:655px;top:126px">Surface Tools</div><div class="t" style="left:746px;top:126px">Solid Tools</div><div class="t" style="left:823px;top:126px">Mesh Tools</div><div class="t" style="left:904px;top:126px">Render Tools</div><div class="t" style="left:994px;top:126px">Drafting</div><div class="t" style="left:1057px;top:126px">New in V6</div>

<div class="t b" style="left:72px;top:182px;color:#0d1a33">Right</div>

<!-- bottom tabs text -->
<div class="t" style="left:74px;top:665px">Perspective</div><div class="t" style="left:149px;top:665px">Top</div><div class="t" style="left:184px;top:665px">Front</div><div class="t" style="left:227px;top:665px">Right</div><div class="t" style="left:269px;top:665px">Page 1</div><div class="t" style="left:319px;top:665px">Page 2</div>

<!-- panel tabs text -->
<div class="t" style="left:1063px;top:192px">Pr...</div><div class="t" style="left:1113px;top:192px">La...</div><div class="t" style="left:1163px;top:192px">Re...</div><div class="t" style="left:1213px;top:192px">M...</div><div class="t" style="left:1265px;top:192px">Lib...</div><div class="t" style="left:1315px;top:192px">Help</div>

<!-- properties -->
<div class="t" style="left:1048px;top:250px;font-size:13px;letter-spacing:.3px">Viewport</div>
<div class="t" style="left:1067px;top:273px">Title</div><div class="t" style="left:1206px;top:273px">Right</div>
<div class="t g" style="left:1067px;top:294px">Width</div><div class="t g n" style="left:1206px;top:294px">967</div>
<div class="t g" style="left:1067px;top:315px">Height</div><div class="t g n" style="left:1206px;top:315px">480</div>
<div class="t" style="left:1067px;top:336px">Projection</div><div class="t" style="left:1205px;top:336px">Parallel</div>
<div class="t" style="left:1048px;top:360px;font-size:13px;letter-spacing:.2px">Camera</div>
<div class="t g" style="left:1067px;top:383px">Lens Length</div><div class="t g n" style="left:1206px;top:383px">50.0</div>
<div class="t" style="left:1067px;top:404px">Rotation</div><div class="t n" style="left:1206px;top:404px">0.0</div>
<div class="t" style="left:1067px;top:425px">X Location</div><div class="t n" style="left:1206px;top:425px">-1616.159</div>
<div class="t" style="left:1067px;top:446px">Y Location</div><div class="t n" style="left:1206px;top:446px">1188.827</div>
<div class="t" style="left:1067px;top:467px">Z Location</div><div class="t n" style="left:1206px;top:467px">-4107.18</div>
<div class="t" style="left:1067px;top:488px">Distance to Target</div><div class="t n" style="left:1206px;top:488px">4542.716</div>
<div class="t" style="left:1067px;top:509px">Location</div><div class="t" style="left:1263px;top:509px;letter-spacing:-.1px">Place...</div>
<div class="t" style="left:1048px;top:533px;font-size:13px">Target</div>
<div class="t" style="left:1067px;top:556px">X Target</div><div class="t n" style="left:1206px;top:556px">-35.077</div>
<div class="t" style="left:1067px;top:577px">Y Target</div><div class="t n" style="left:1206px;top:577px">1.717</div>
<div class="t" style="left:1067px;top:598px">Z Target</div><div class="t n" style="left:1206px;top:598px">-17.288</div>
<div class="t" style="left:1067px;top:619px">Location</div><div class="t" style="left:1263px;top:619px;letter-spacing:-.1px">Place...</div>
<div class="t" style="left:1048px;top:643px;font-size:13px">Wallpaper</div>
<div class="a" style="left:1063px;top:662px;width:295px;height:15px;overflow:hidden">
<div class="t" style="left:4px;top:4px">Filename</div><div class="t" style="left:142px;top:4px">(none)</div><div class="t" style="left:282px;top:1px">...</div></div>

<!-- osnap -->
<div class="t" style="left:25px;top:691px">End</div><div class="t" style="left:68px;top:691px">Near</div><div class="t" style="left:116px;top:691px">Point</div><div class="t" style="left:167px;top:691px">Mid</div><div class="t" style="left:212px;top:691px">Cen</div><div class="t" style="left:255px;top:691px">Int</div><div class="t" style="left:292px;top:691px">Perp</div><div class="t" style="left:339px;top:691px">Tan</div><div class="t" style="left:382px;top:691px">Quad</div><div class="t" style="left:434px;top:691px">Knot</div><div class="t" style="left:482px;top:691px">Vertex</div><div class="t" style="left:537px;top:691px;color:#333">Project</div><div class="t" style="left:605px;top:691px;color:#333">Disable</div>

<!-- status text -->
<div class="t" style="left:6px;top:712px">CPlane</div><div class="t n" style="left:71px;top:712px">x -84.240</div><div class="t n" style="left:158px;top:712px">y 234.821</div><div class="t n" style="left:252px;top:712px">z 0.000</div><div class="t" style="left:328px;top:712px;letter-spacing:.2px">Millimeters</div><div class="t" style="left:421px;top:712px">Varies</div><div class="t" style="left:577px;top:712px;letter-spacing:-.3px">Grid Snap</div><div class="t b" style="left:641px;top:712px">Ortho</div><div class="t" style="left:687px;top:712px">Planar</div><div class="t b" style="left:734px;top:712px">Osnap</div><div class="t b" style="left:780px;top:712px;letter-spacing:-.2px">SmartTrack</div><div class="t" style="left:856px;top:712px">Gumball</div><div class="t" style="left:915px;top:712px;letter-spacing:-.15px">Record History</div><div class="t" style="left:1007px;top:712px">Filter</div><div class="t" style="left:1041px;top:712px;letter-spacing:-.15px">Absolute tolerance: 0.001</div>

<!-- taskbar text -->
<div class="t" style="left:88px;top:742px;font-size:15px;line-height:16px;height:16px;color:#3a3a3a">Type here to search</div>
<div class="t w" style="left:1213px;top:742px;font-size:11.5px">ENG</div>
<div class="t w" style="left:1264px;top:731px;letter-spacing:-.4px">14:09</div>
<div class="t w" style="left:1249px;top:750px;letter-spacing:-.3px">04-02-2019</div>
<div class="t w" style="left:1334px;top:748px;font-size:12px">22</div>
</body></html>
